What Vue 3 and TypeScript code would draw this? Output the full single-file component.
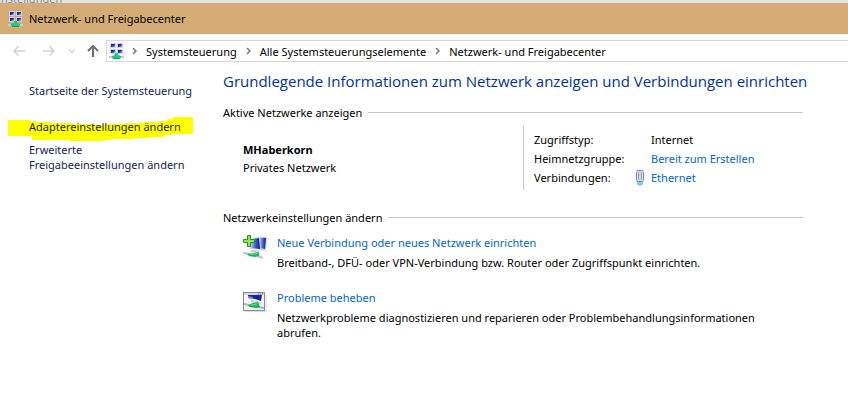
<script setup lang="ts">
interface Crumb {
  label: string
}

interface Task {
  title: string
  text: string
  icon: 'connect' | 'repair'
}

const crumbs: Crumb[] = [
  { label: 'Systemsteuerung' },
  { label: 'Alle Systemsteuerungselemente' },
  { label: 'Netzwerk- und Freigabecenter' },
]

const tasks: Task[] = [
  {
    title: 'Neue Verbindung oder neues Netzwerk einrichten',
    text: 'Breitband-, DFÜ- oder VPN-Verbindung bzw. Router oder Zugriffspunkt einrichten.',
    icon: 'connect',
  },
  {
    title: 'Probleme beheben',
    text: 'Netzwerkprobleme diagnostizieren und reparieren oder Problembehandlungsinformationen abrufen.',
    icon: 'repair',
  },
]
</script>

<template>
  <svg class="defs" width="0" height="0" aria-hidden="true">
    <defs>
      <linearGradient id="screen" x1="0" y1="0" x2="1" y2="1">
        <stop offset="0" stop-color="#0b1496" />
        <stop offset="0.5" stop-color="#1c36c4" />
        <stop offset="1" stop-color="#b9ccf5" />
      </linearGradient>
      <linearGradient id="screen-front" x1="0" y1="0" x2="1" y2="0">
        <stop offset="0" stop-color="#b4c6f4" />
        <stop offset="0.45" stop-color="#4a62d8" />
        <stop offset="1" stop-color="#0d1490" />
      </linearGradient>
      <symbol id="network" viewBox="0 0 16 16">
        <g fill="#d0d3dc">
          <rect x="1" y="0" width="6" height="5" />
          <rect x="8" y="0" width="6" height="5" />
          <rect x="1" y="6" width="6" height="5" />
          <rect x="8" y="6" width="6" height="5" />
        </g>
        <g fill="url(#screen)">
          <rect x="2" y="1" width="4" height="3" />
          <rect x="9" y="1" width="4" height="3" />
          <rect x="2" y="7" width="4" height="3" />
          <rect x="9" y="7" width="4" height="3" />
        </g>
        <rect x="0" y="13" width="15" height="2" fill="#c5cbd0" />
        <path d="M6 10h3v2l3 1v2H3v-2l3-1z" fill="#13cf7f" />
        <path d="M4 15.500h7" stroke="#0ca865" />
      </symbol>
    </defs>
  </svg>

  <div class="window">
    <div class="behind" aria-hidden="true"><span>Einstellungen</span></div>

    <header class="titlebar">
      <svg class="app-icon" width="16" height="16"><use href="#network" /></svg>
      <span>Netzwerk- und Freigabecenter</span>
    </header>

    <nav class="navbar" aria-label="Navigation">
      <button class="nav-btn" type="button" disabled aria-label="Zurück">
        <svg width="14" height="12" viewBox="0 0 14 12"><path d="M13 6H2M6.500 1.500 2 6l4.500 4.500" /></svg>
      </button>
      <button class="nav-btn forward" type="button" disabled aria-label="Vorwärts">
        <svg width="14" height="12" viewBox="0 0 14 12"><path d="M1 6h11M7.500 1.500 12 6l-4.500 4.500" /></svg>
      </button>
      <button class="nav-btn recent" type="button" disabled aria-label="Zuletzt besucht">
        <svg width="8" height="6" viewBox="0 0 8 6"><path d="m1 1.500 3 3 3-3" /></svg>
      </button>
      <button class="nav-btn up" type="button" aria-label="Nach oben">
        <svg width="14" height="14" viewBox="0 0 14 14"><path d="M7 13V2M2 7l5-5 5 5" /></svg>
      </button>
      <div class="address">
        <svg class="address-icon" width="16" height="16"><use href="#network" /></svg>
        <template v-for="crumb in crumbs" :key="crumb.label">
          <svg class="sep" width="5" height="8" viewBox="0 0 5 8"><path d="m1 1 3 3-3 3" /></svg>
          <a class="crumb" href="#">{{ crumb.label }}</a>
        </template>
      </div>
    </nav>

    <div class="body">
      <aside class="sidebar">
        <a class="home" href="#">Startseite der Systemsteuerung</a>
        <a class="marked" href="#">
          <svg class="marker" width="186" height="24" viewBox="0 0 186 24" aria-hidden="true">
            <path
              d="M0 3h22v1h6v1h15v1h22v1h20v1h14V7h18V6h20V5h15V4h8V2h5V0h20v17h-21v1h-7v2h-14v1h-16v1h-24v1H96v1H61v-1H24v-4H0z"
              fill="#ffff00"
            />
          </svg>
          <span>Adaptereinstellungen ändern</span>
        </a>
        <a href="#">Erweiterte<br />Freigabeeinstellungen ändern</a>
      </aside>

      <main class="content">
        <h1>Grundlegende Informationen zum Netzwerk anzeigen und Verbindungen einrichten</h1>

        <h2><span>Aktive Netzwerke anzeigen</span></h2>
        <section class="networks">
          <div class="network">
            <strong>MHaberkorn</strong>
            <span>Privates Netzwerk</span>
          </div>
          <dl class="details">
            <dt>Zugriffstyp:</dt>
            <dd>Internet</dd>
            <dt>Heimnetzgruppe:</dt>
            <dd><a href="#">Bereit zum Erstellen</a></dd>
            <dt>Verbindungen:</dt>
            <dd>
              <svg class="plug" width="10" height="16" viewBox="0 0 10 16" aria-hidden="true">
                <path d="M3 11v4M5 12v4M7 11v4" stroke="#1a97cf" />
                <path d="M2.500 .500h5l1 2v7l-1 2h-5l-1-2v-7z" fill="#dbe2ec" stroke="#76879e" />
                <path d="M3.500 3v6h3V3" fill="#f4f7fb" stroke="#8b9bb2" />
                <path d="M5 1v6" stroke="#a9b5c6" />
              </svg>
              <a href="#">Ethernet</a>
            </dd>
          </dl>
        </section>

        <h2><span>Netzwerkeinstellungen ändern</span></h2>
        <ul class="tasks">
          <li v-for="task in tasks" :key="task.title">
            <svg v-if="task.icon === 'connect'" width="24" height="24" viewBox="0 0 24 24" aria-hidden="true">
              <path d="m16 2 8 0-1 14-6-1z" fill="#cbd3e2" />
              <path d="m17 3 6 0-1 11-5-1z" fill="url(#screen-front)" />
              <path d="m7 4 9-2 2 13-11-1z" fill="#cfd8e8" />
              <path d="m8 4 8-1 1 11-9-1z" fill="url(#screen-front)" />
              <path d="m9 15 8 1-2 2-8-1z" fill="#c5cad0" />
              <path d="m0 18 7 1M14 21l6 2" stroke="#bfc6cb" stroke-width="2" />
              <path d="m4 19 7-1 5-1v4l-4 1-6-1z" fill="#21b35b" />
              <path d="m7 19 5 0 3-1" fill="none" stroke="#6ee29a" />
              <path
                d="M4.500 .500h3v4h4v3h-4v4h-3v-4h-4v-3h4z"
                fill="#8fe75c"
                stroke="#239516"
              />
            </svg>
            <svg v-else width="24" height="24" viewBox="0 0 24 24" aria-hidden="true">
              <path d="M2 21.500h21V5" fill="none" stroke="#dddddd" />
              <rect x=".5" y="2.500" width="21" height="18" fill="#f4f6f7" stroke="#858b92" />
              <path d="M1 4h20" stroke="#d5d9dd" stroke-width="2" />
              <path d="M15 4h1M17 4h1M19 4h1" stroke="#4b535d" />
              <path d="M5 5h14l-1 6-6-2-7-1z" fill="#1722a0" />
              <path d="m5 6 5 1v2L5 8z" fill="#7187dc" />
              <path d="m8 10 11 2-2 2-9-2z" fill="#d0d5d8" />
              <path d="m1 14 5 1M15 17l6 1" stroke="#a9b4b4" stroke-width="2" />
              <path d="m5 15 5-2 5-1 2 5-3 1-8-1z" fill="#20b45b" />
              <path d="m8 15 6-1" stroke="#68db92" />
            </svg>
            <div>
              <a href="#">{{ task.title }}</a>
              <p>{{ task.text }}</p>
            </div>
          </li>
        </ul>
      </main>
    </div>
  </div>
</template>

<style>
body {
  margin: 0;
  background: #ffffff;
}
</style>

<style scoped>
.defs {
  position: absolute;
}

.window {
  font-family: 'Noto Sans', 'Open Sans', sans-serif;
  font-size: 11px;
  line-height: 15px;
  color: #000000;
}

a {
  color: #0066cc;
  text-decoration: none;
}

.behind {
  display: flex;
  align-items: flex-end;
  height: 3px;
  overflow: hidden;
  background: #e2e2e5;
  color: #8a8a8a;
}

.behind span {
  margin-left: -8px;
  line-height: 9px;
}

.titlebar {
  display: flex;
  align-items: center;
  gap: 5px;
  height: 31px;
  padding-left: 8px;
  background: #d5ac75;
}

.navbar {
  display: flex;
  align-items: center;
  padding: 6px 0 0 12px;
}

.nav-btn {
  display: flex;
  padding: 0;
  border: 0;
  background: none;
}

.nav-btn path {
  fill: none;
  stroke: #d2d2d2;
  stroke-width: 1.5;
}

.forward {
  margin-left: 16px;
}

.recent {
  margin-left: 12px;
}

.up {
  margin-left: 10px;
}

.up path {
  stroke: #6e6e6e;
  stroke-width: 2;
}

.address {
  display: flex;
  flex: 1;
  align-items: center;
  height: 20px;
  margin-left: 6px;
  padding-left: 2px;
  border: 1px solid #d9d9d9;
  border-right: 0;
}

.address-icon {
  margin-right: -2px;
}

.sep {
  margin: 0 9px;
}

.sep path {
  fill: none;
  stroke: #777777;
  stroke-width: 1.5;
}

.crumb {
  color: #000000;
}

.body {
  display: grid;
  grid-template-columns: 194px minmax(0, 1fr);
  gap: 29px;
  padding-right: 45px;
}

.sidebar {
  display: flex;
  flex-direction: column;
  gap: 8px;
  padding: 21px 0 0 29px;
  white-space: nowrap;
}

.sidebar a {
  color: #151c55;
}

.sidebar .home {
  margin-bottom: 13px;
}

.marked {
  position: relative;
}

.marked span {
  position: relative;
}

.sidebar .marked {
  color: #1e1e10;
}

.marker {
  position: absolute;
  top: -2px;
  left: -21px;
}

.content {
  padding-top: 7px;
}

h1 {
  margin: 0;
  font-family: 'Open Sans', 'Noto Sans', sans-serif;
  font-size: 15px;
  font-weight: 400;
  line-height: 24px;
  color: #003399;
  white-space: nowrap;
}

h2 {
  display: flex;
  align-items: center;
  gap: 6px;
  margin: 12px 0 0;
  font-size: 11px;
  font-weight: 400;
}

h2::after {
  content: '';
  flex: 1;
  height: 1px;
  background: #c8c8c8;
}

.networks {
  display: grid;
  grid-template-columns: 300px 1fr;
  padding-top: 6px;
}

.network {
  display: flex;
  flex-direction: column;
  gap: 3px;
  padding: 16px 0 0 20px;
}

.details {
  display: grid;
  grid-template-columns: 101px 1fr;
  align-items: center;
  grid-auto-rows: 19px;
  margin: 0;
  padding: 4px 0 3px 10px;
  border-left: 1px solid #c8c8c8;
}

dd {
  display: flex;
  align-items: center;
  margin: 0;
  padding-left: 16px;
}

.plug {
  margin: 0 6px 0 -16px;
}

.networks + h2 {
  margin-top: 20px;
}

.tasks {
  display: grid;
  gap: 20px;
  margin: 0;
  padding: 10px 20px 0;
  list-style: none;
}

.tasks li {
  display: grid;
  grid-template-columns: 24px minmax(0, 1fr);
  gap: 10px;
}

.tasks p {
  margin: 5px 0 0;
}
</style>
